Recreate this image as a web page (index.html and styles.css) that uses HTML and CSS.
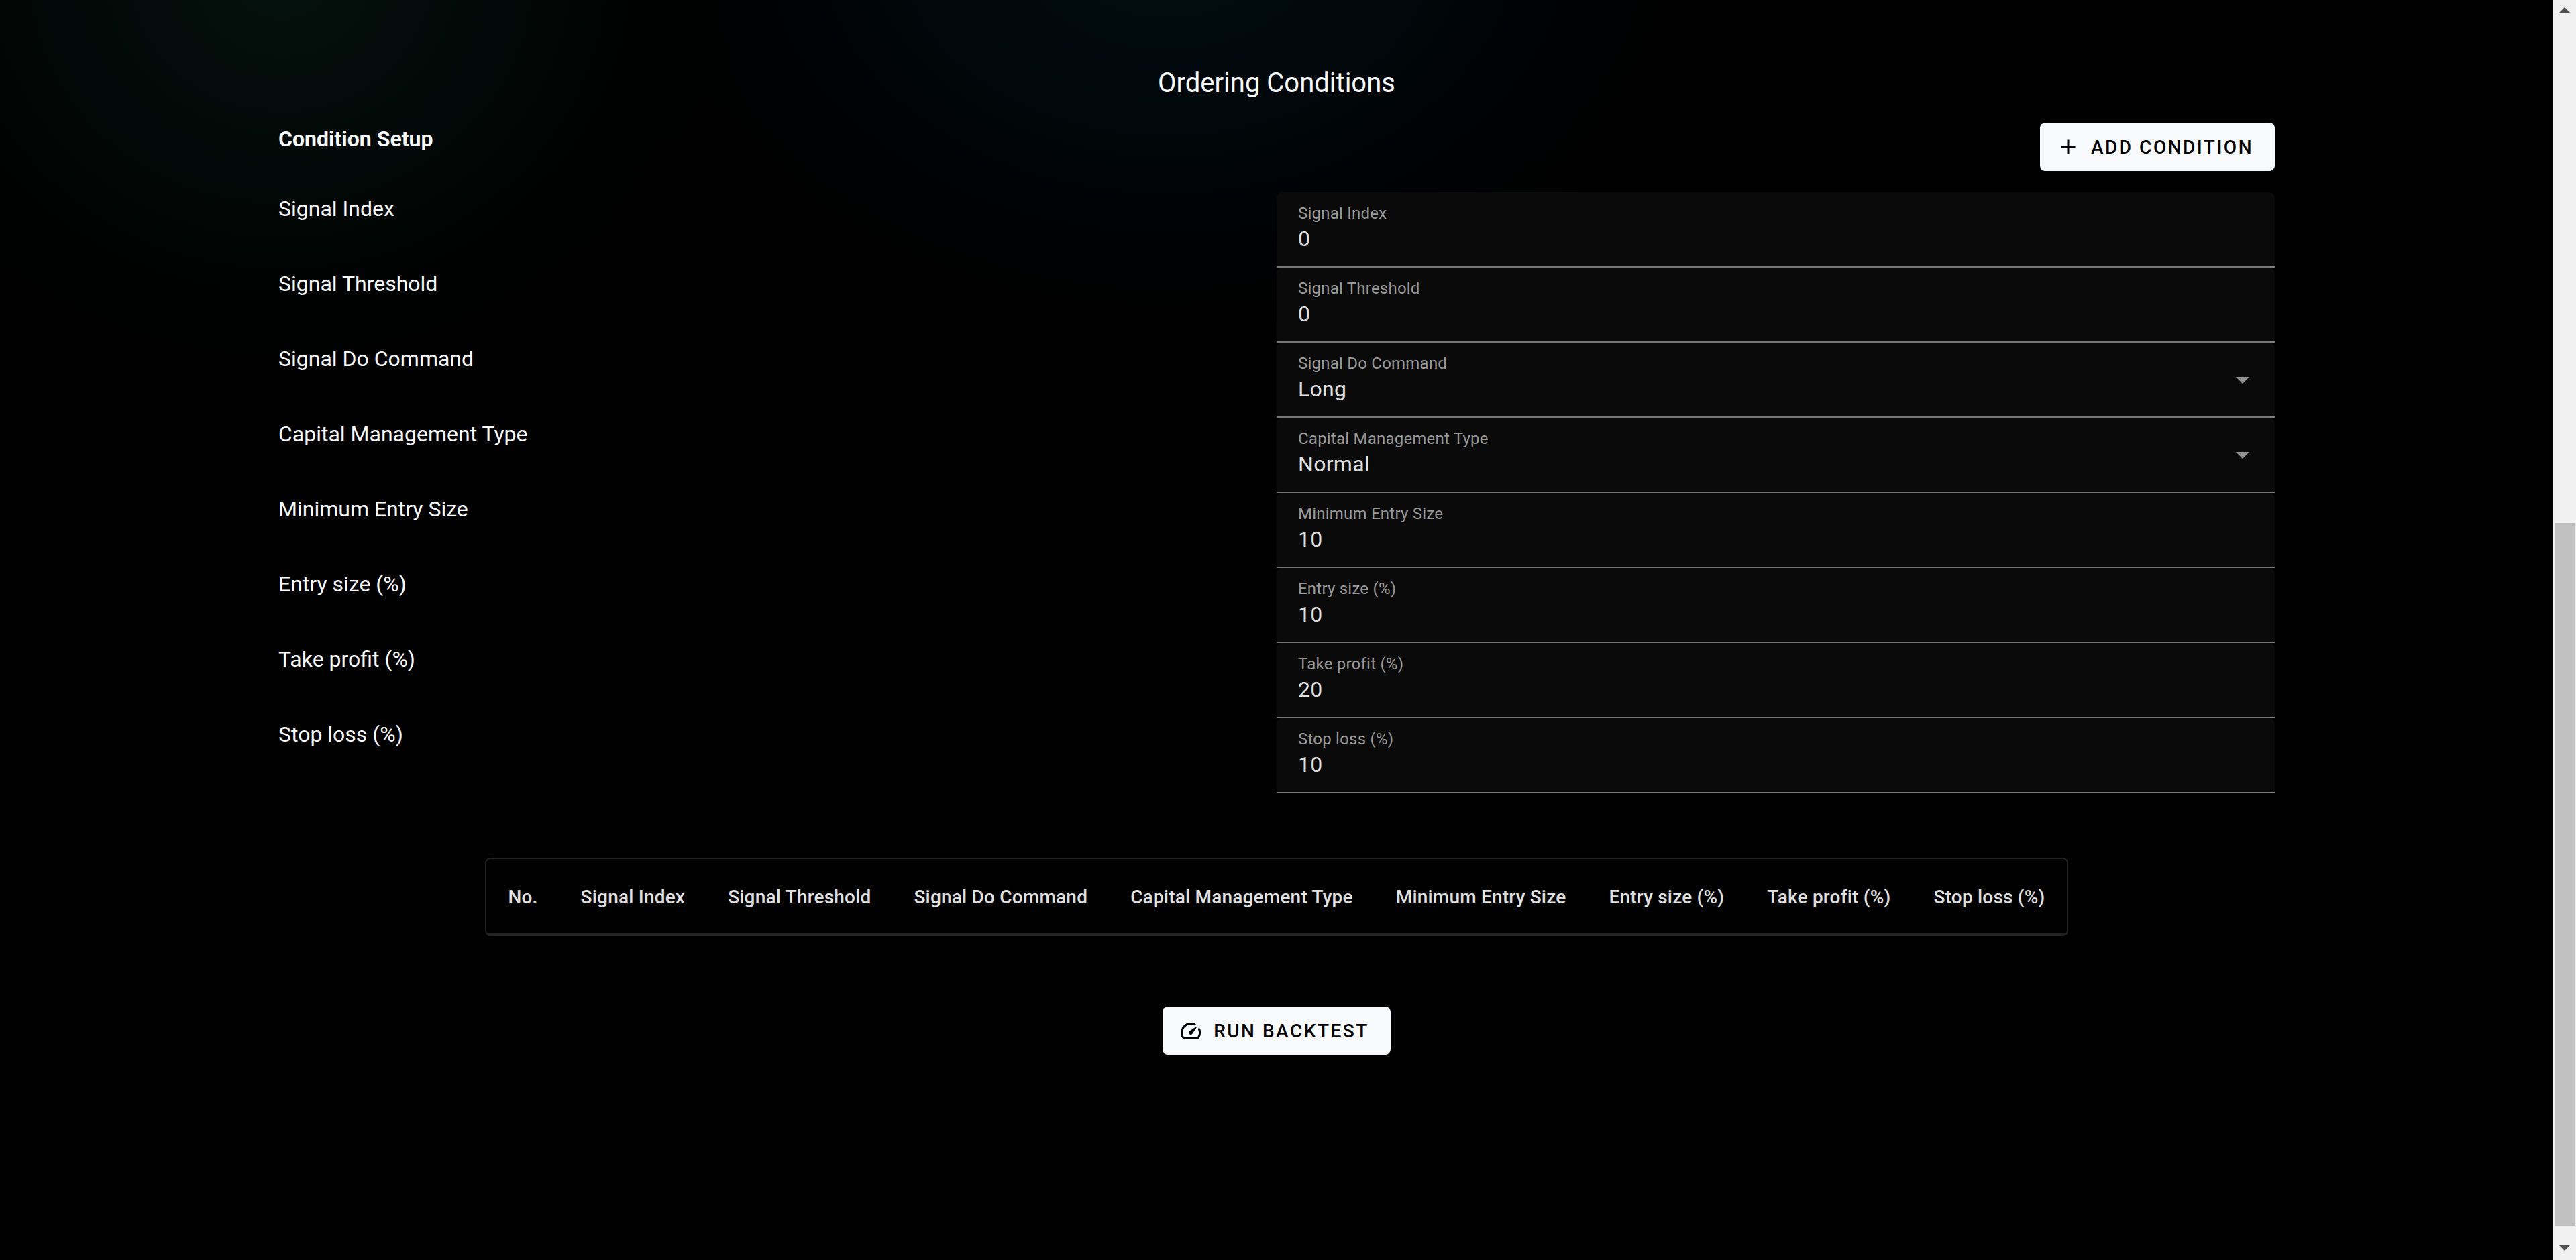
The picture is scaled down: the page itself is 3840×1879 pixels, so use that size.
FILE: index.html
```html
<!DOCTYPE html>
<html lang="en">
<head>
<meta charset="utf-8">
<meta name="viewport" content="width=device-width, initial-scale=1">
<title>Ordering Conditions</title>
<link rel="stylesheet" href="styles.css">
</head>
<body class="page">
<main class="content">
  <h1 class="title">Ordering Conditions</h1>
  <form class="setup">
    <header class="setup-head">
      <h2 class="subtitle">Condition Setup</h2>
      <button class="btn" type="button">
        <svg class="btn-icon" viewBox="0 0 24 24" aria-hidden="true"><path d="M19,13H13V19H11V13H5V11H11V5H13V11H19V13Z"/></svg>
        Add condition
      </button>
    </header>
    <div class="row">
      <span class="row-name">Signal Index</span>
      <div class="field"><label class="field-label" for="index">Signal Index</label><input class="field-input" id="index" type="number" value="0"></div>
    </div>
    <div class="row">
      <span class="row-name">Signal Threshold</span>
      <div class="field"><label class="field-label" for="threshold">Signal Threshold</label><input class="field-input" id="threshold" type="number" value="0"></div>
    </div>
    <div class="row">
      <span class="row-name">Signal Do Command</span>
      <div class="field"><label class="field-label" for="command">Signal Do Command</label><select class="field-input" id="command"><option>Long</option><option>Short</option></select><svg class="field-arrow" viewBox="0 0 24 24" aria-hidden="true"><path d="M7,10L12,15L17,10H7Z"/></svg></div>
    </div>
    <div class="row">
      <span class="row-name">Capital Management Type</span>
      <div class="field"><label class="field-label" for="capital">Capital Management Type</label><select class="field-input" id="capital"><option>Normal</option></select><svg class="field-arrow" viewBox="0 0 24 24" aria-hidden="true"><path d="M7,10L12,15L17,10H7Z"/></svg></div>
    </div>
    <div class="row">
      <span class="row-name">Minimum Entry Size</span>
      <div class="field"><label class="field-label" for="minimum">Minimum Entry Size</label><input class="field-input" id="minimum" type="number" value="10"></div>
    </div>
    <div class="row">
      <span class="row-name">Entry size (%)</span>
      <div class="field"><label class="field-label" for="entry">Entry size (%)</label><input class="field-input" id="entry" type="number" value="10"></div>
    </div>
    <div class="row">
      <span class="row-name">Take profit (%)</span>
      <div class="field"><label class="field-label" for="profit">Take profit (%)</label><input class="field-input" id="profit" type="number" value="20"></div>
    </div>
    <div class="row">
      <span class="row-name">Stop loss (%)</span>
      <div class="field"><label class="field-label" for="loss">Stop loss (%)</label><input class="field-input" id="loss" type="number" value="10"></div>
    </div>
  </form>
  <table class="conditions">
    <thead>
      <tr><th>No.</th><th>Signal Index</th><th>Signal Threshold</th><th>Signal Do Command</th><th>Capital Management Type</th><th>Minimum Entry Size</th><th>Entry size (%)</th><th>Take profit (%)</th><th>Stop loss (%)</th></tr>
    </thead>
  </table>
  <button class="btn" type="button">
    <svg class="btn-icon" viewBox="0 0 24 24" aria-hidden="true"><path d="M20.38 8.57l-1.23 1.85a8 8 0 0 1-.22 7.58H5.07A8 8 0 0 1 15.58 6.85l1.85-1.23A10 10 0 0 0 3.35 19a2 2 0 0 0 1.72 1h13.85a2 2 0 0 0 1.74-1 10 10 0 0 0-.27-10.44zm-9.79 6.84a2 2 0 0 0 2.83 0l5.66-8.49-8.49 5.66a2 2 0 0 0 0 2.83z"/></svg>
    Run Backtest
  </button>
</main>
<div class="scrollbar" aria-hidden="true">
  <svg class="scroll-arrow" viewBox="0 0 34 34"><path d="M9 19L17 11L25 19Z"/></svg>
  <div class="scroll-track">
    <div class="scroll-before"></div>
    <div class="scroll-thumb"></div>
    <div class="scroll-after"></div>
  </div>
  <svg class="scroll-arrow" viewBox="0 0 34 34"><path d="M9 12H25L17 20Z"/></svg>
</div>
</body>
</html>
```
FILE: styles.css
```css
* {
  box-sizing: border-box;
}

.page {
  margin: 0;
  min-height: 100vh;
  display: flex;
  background: #000;
  color: #f8fafc;
  font-family: Roboto, "Liberation Sans", sans-serif;
  font-size: 32px;
  line-height: 48px;
}

.content {
  flex: 1;
  min-width: 0;
  display: flex;
  flex-direction: column;
  align-items: center;
  padding: 96px 32px;
  background:
    radial-gradient(ellipse 700px 640px at 420px -40px, rgb(4, 17, 13), rgba(3, 12, 10, 0.85) 40%, rgba(1, 4, 3, 0.5) 75%, transparent),
    radial-gradient(ellipse 860px 640px at 1740px -100px, rgb(1, 14, 20), rgba(1, 9, 13, 0.85) 40%, rgba(0, 3, 5, 0.5) 70%, transparent);
}

.title {
  margin: 0 0 31px;
  font-size: 40px;
  line-height: 56px;
  font-weight: 400;
}

.setup {
  width: 100%;
  max-width: 2976px;
}

.setup-head {
  display: flex;
  justify-content: space-between;
  align-items: flex-start;
  margin-bottom: 32px;
}

.subtitle {
  margin: 0;
  font-size: 32px;
  font-weight: 700;
}

.btn {
  display: inline-flex;
  align-items: center;
  gap: 16px;
  height: 72px;
  padding: 0 32px 0 24px;
  border: 0;
  border-radius: 8px;
  background: #f8fafc;
  color: #000;
  font-family: inherit;
  font-size: 28px;
  font-weight: 500;
  letter-spacing: 0.0892857em;
  text-transform: uppercase;
  white-space: nowrap;
}

.btn-icon {
  width: 36px;
  height: 36px;
}

.row {
  display: grid;
  grid-template-columns: 1fr 1fr;
}

.field {
  position: relative;
  display: flex;
  flex-direction: column;
  padding: 16px 0 18px;
  border-bottom: 2px solid #767676;
  border-radius: 8px 8px 0 0;
  background: #0a0a0a;
}

.field-label {
  padding: 0 32px;
  color: #989898;
  font-size: 24px;
  line-height: 30px;
  letter-spacing: 0.009375em;
}

.field-input {
  appearance: none;
  -moz-appearance: textfield;
  width: 100%;
  height: 46px;
  padding: 0 32px;
  border: 0;
  outline: 0;
  background: transparent;
  color: #dfdfdf;
  font-family: inherit;
  font-size: 32px;
  line-height: 46px;
  letter-spacing: 0.009375em;
}

.field-input::-webkit-inner-spin-button {
  display: none;
}

.field-arrow {
  position: absolute;
  top: 31px;
  right: 24px;
  width: 48px;
  height: 48px;
  fill: #929292;
  pointer-events: none;
}

.conditions {
  margin: 96px 0 105px;
  border: 2px solid #212121;
  border-radius: 8px;
  border-spacing: 0;
  color: #e0e0e0;
  font-size: 28px;
  letter-spacing: 0.0071428571em;
  white-space: nowrap;
}

.conditions th {
  height: 113px;
  padding: 2px 32px 0;
  border-bottom: 2px solid #212121;
  font-weight: 500;
  text-align: left;
}

.scrollbar {
  width: 34px;
  display: flex;
  flex-direction: column;
  background: #f0f0f0;
}

.scroll-arrow {
  width: 34px;
  height: 34px;
  fill: #505050;
}

.scroll-track {
  flex: 1;
  display: flex;
  flex-direction: column;
  padding: 0 2px;
}

.scroll-before {
  flex: 746;
}

.scroll-thumb {
  flex: 1048;
  background: #c1c1c1;
}

.scroll-after {
  flex: 17;
}
```
